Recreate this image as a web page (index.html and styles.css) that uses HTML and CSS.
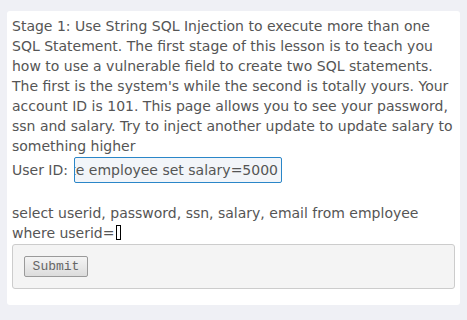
FILE: index.html
```html
<!DOCTYPE html>
<html>
<head>
<meta charset="utf-8">
<link rel="stylesheet" href="styles.css">
</head>
<body>
<div class="card">
  <p class="intro">Stage 1: Use String SQL Injection to execute more than one SQL Statement. The first stage of this lesson is to teach you how to use a vulnerable field to create two SQL statements. The first is the system's while the second is totally yours. Your account ID is 101. This page allows you to see your password, ssn and salary. Try to inject another update to update salary to something higher</p>
  <div class="row">
    <span class="label">User ID:</span>
    <div class="field"><span>101; update employee set salary=5000</span></div>
  </div>
  <p class="query">select userid, password, ssn, salary, email from employee where userid=<span class="caret"></span></p>
  <div class="actions">
    <button class="btn" type="button">Submit</button>
  </div>
</div>
</body>
</html>
```
FILE: styles.css
```css
html, body {
  margin: 0;
  padding: 0;
  background: #eff0f5;
}
body {
  padding: 11px 7px 15px 7px;
  font-family: "DejaVu Sans", sans-serif;
  font-size: 14px;
  line-height: 20px;
  color: #555;
}
.card {
  background: #fff;
  border-radius: 3px;
  padding: 5px 5px 16px 5px;
}
.intro {
  margin: 0;
}
.row {
  display: flex;
  align-items: center;
  gap: 6px;
  height: 26px;
  margin-top: 1px;
}
.label {
  white-space: nowrap;
}
.field {
  width: 200px;
  height: 24px;
  border: 1px solid #2a86c8;
  border-radius: 2px;
  background: #f2f5f9;
  padding: 0 3px;
  display: flex;
  justify-content: flex-end;
  align-items: center;
  overflow: hidden;
  white-space: nowrap;
  color: #555;
}
.field span {
  flex: none;
}
.query {
  margin: 20px 0 0 0;
}
.caret {
  display: inline-block;
  width: 3px;
  height: 13px;
  border: 1px solid #000;
  vertical-align: -2px;
  margin-left: 1px;
}
.actions {
  margin-top: 1px;
  background: #f4f4f4;
  border: 1px solid #ccc;
  border-radius: 3px;
  padding: 11px;
  height: 21px;
}
.btn {
  font-family: "Liberation Mono", monospace;
  font-size: 13px;
  color: #666;
  width: 64px;
  height: 21px;
  padding: 0;
  border: 1px solid #9a9a9a;
  border-radius: 2px;
  background: linear-gradient(#f4f4f4, #dcdcdc);
  display: block;
}
```
